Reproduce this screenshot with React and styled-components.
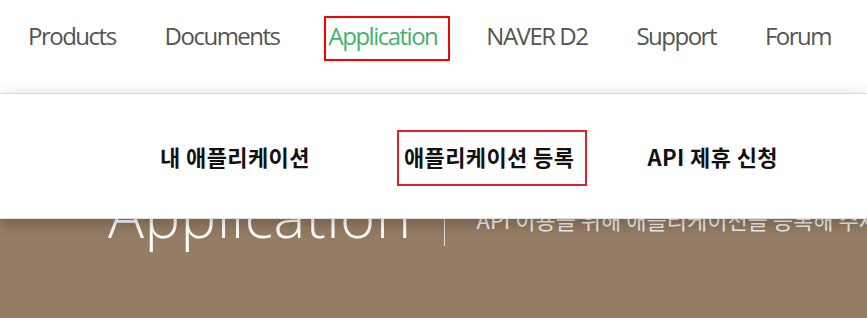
import React from 'react'
import styled, { createGlobalStyle } from 'styled-components'

const GlobalStyle = createGlobalStyle`
  body {
    margin: 0;
    overflow: hidden;
    background: #fff;
  }
`

const menus = ['Products', 'Documents', 'Application', 'NAVER D2', 'Support', 'Forum']
const subMenus = ['내 애플리케이션', '애플리케이션 등록', 'API 제휴 신청']

const Page = styled.div`
  position: relative;
  width: 867px;
  height: 318px;
  display: flex;
  flex-direction: column;
  overflow: hidden;
`

const Header = styled.nav`
  height: 94px;
  flex-shrink: 0;
  border-bottom: 1px solid #e6e6e6;
  display: flex;
  align-items: flex-start;
  gap: 49px;
  padding: 19px 0 0 28px;
  box-sizing: border-box;
`

const MenuItem = styled.a`
  position: relative;
  font-family: 'Open Sans', 'Noto Sans', sans-serif;
  font-size: 24px;
  letter-spacing: -1.5px;
  color: ${p => (p.$active ? '#44b26c' : '#545454')};
  white-space: nowrap;
  cursor: pointer;

  ${p => p.$active && `
    &::after {
      content: '';
      position: absolute;
      left: -5px;
      right: -13px;
      top: -3px;
      bottom: -9px;
      border: 2px solid #f00;
    }
  `}
`

const Dropdown = styled.div`
  position: absolute;
  top: 94px;
  left: 0;
  right: 0;
  height: 124px;
  background: #fff;
  border-bottom: 1px solid #e2e2e2;
  box-shadow: 0 4px 14px rgba(0, 0, 0, 0.25);
  display: flex;
  align-items: center;
  padding-left: 160px;
  gap: 73px;
  z-index: 10;
`

const SubItem = styled.a`
  position: relative;
  font-family: 'Noto Sans CJK KR', 'Noto Sans', sans-serif;
  font-weight: 700;
  font-size: 22px;
  letter-spacing: 0.4px;
  color: #111;
  white-space: nowrap;
  cursor: pointer;

  &:first-child {
    margin-right: 21px;
  }

  ${p => p.$active && `
    &::after {
      content: '';
      position: absolute;
      left: -7px;
      right: -13px;
      top: -10px;
      bottom: -14px;
      border: 2px solid #e2202a;
    }
  `}
`

const Hero = styled.section`
  flex: 1;
  background: #957c64;
  display: flex;
  align-items: flex-start;
  padding: 80px 0 0 108px;
  box-sizing: border-box;
`

const HeroRow = styled.div`
  display: flex;
  align-items: center;
  height: 82px;
`

const HeroTitle = styled.h1`
  margin: 0;
  font-family: 'Open Sans', 'Noto Sans', sans-serif;
  font-weight: 300;
  font-size: 60px;
  line-height: 82px;
  letter-spacing: 0.4px;
  color: #fff;
  white-space: nowrap;
`

const Divider = styled.span`
  width: 1px;
  height: 62px;
  background: rgba(255, 255, 255, 0.75);
  margin: 0 32px;
`

const HeroDesc = styled.p`
  margin: 0;
  padding-top: 8px;
  font-family: 'Noto Sans CJK KR', 'Noto Sans', sans-serif;
  font-weight: 400;
  font-size: 22px;
  color: #eee;
  white-space: nowrap;
`

const App = () => {
  return (
    <>
      <GlobalStyle />
      <Page>
        <Header>
          {menus.map(m => (
            <MenuItem key={m} $active={m === 'Application'}>{m}</MenuItem>
          ))}
        </Header>
        <Hero>
          <HeroRow>
            <HeroTitle>Application</HeroTitle>
            <Divider />
            <HeroDesc>API 이용을 위해 애플리케이션을 등록해 주세요.</HeroDesc>
          </HeroRow>
        </Hero>
        <Dropdown>
          {subMenus.map(s => (
            <SubItem key={s} $active={s === '애플리케이션 등록'}>{s}</SubItem>
          ))}
        </Dropdown>
      </Page>
    </>
  )
}

export default App
